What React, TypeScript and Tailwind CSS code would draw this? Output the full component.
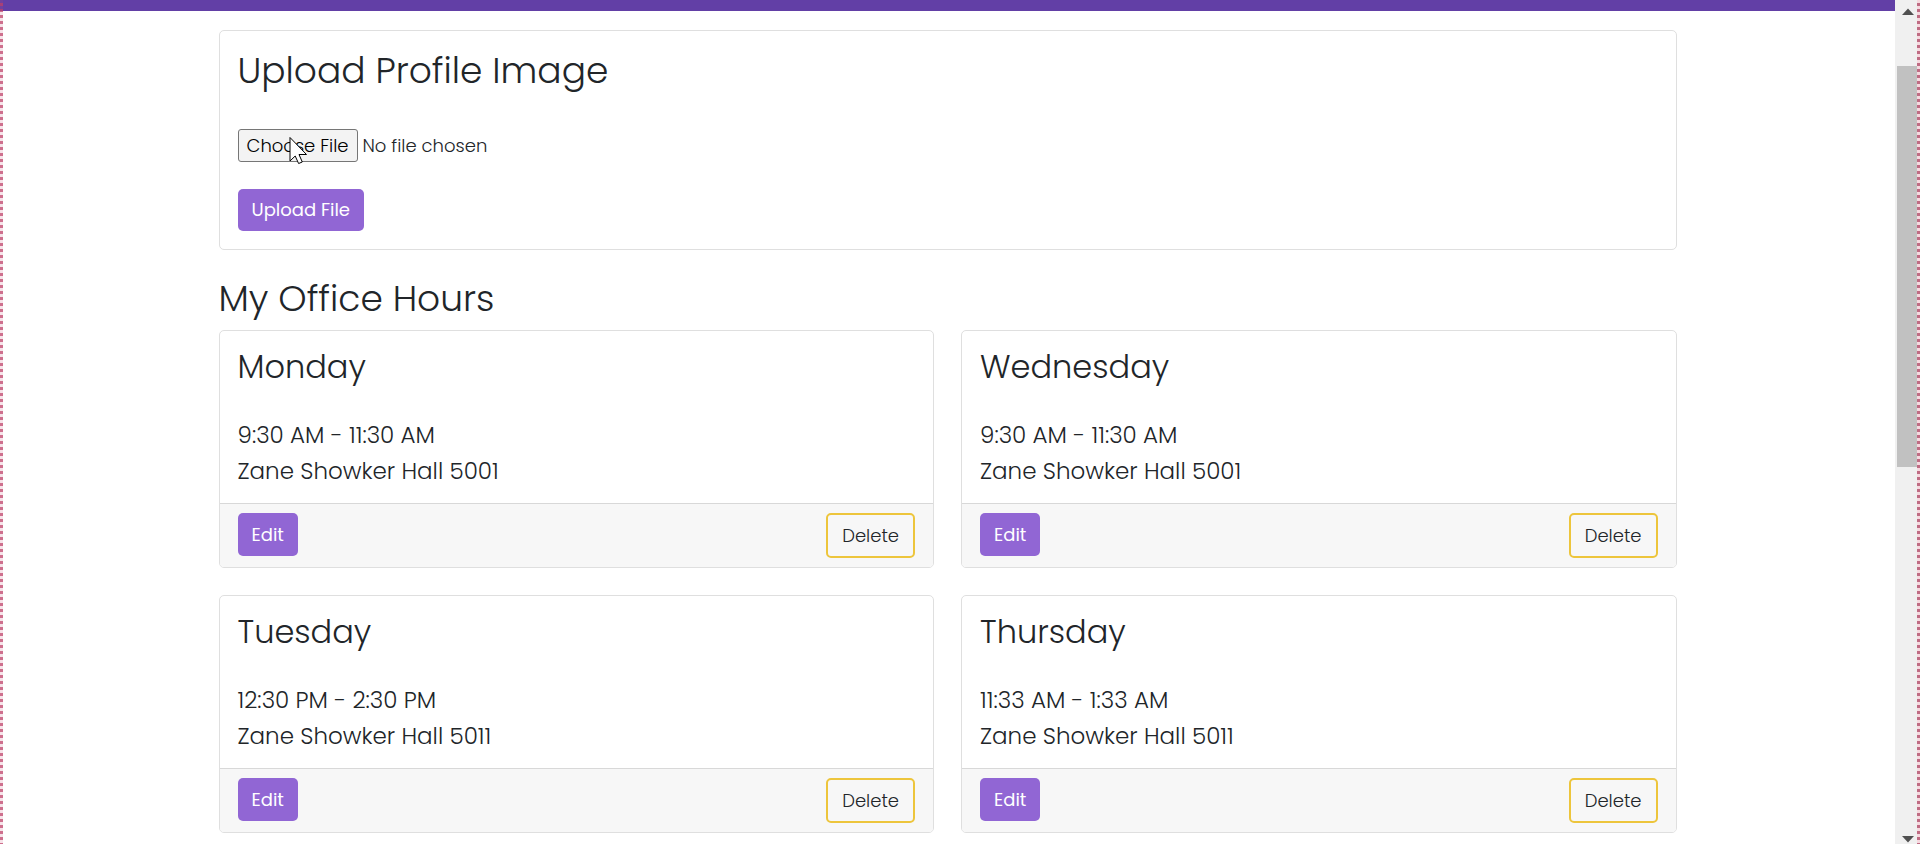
import React from "react";

type Slot = { day: string; time: string; place: string };

const slots: Slot[] = [
  { day: "Monday", time: "9:30 AM - 11:30 AM", place: "Zane Showker Hall 5001" },
  { day: "Wednesday", time: "9:30 AM - 11:30 AM", place: "Zane Showker Hall 5001" },
  { day: "Tuesday", time: "12:30 PM - 2:30 PM", place: "Zane Showker Hall 5011" },
  { day: "Thursday", time: "11:33 AM - 1:33 AM", place: "Zane Showker Hall 5011" },
];

function OfficeHourCard({ day, time, place }: Slot) {
  return (
    <article className="overflow-hidden rounded-[5px] border border-[#dfdfdf] bg-white">
      <div className="px-[18px] pt-[17px] pb-[14px]">
        <h3 className="mb-[31px] text-[32px] leading-[38px]">{day}</h3>
        <p className="text-[23px] leading-9">{time}</p>
        <p className="text-[23px] leading-9">{place}</p>
      </div>
      <div className="flex items-start justify-between border-t border-[#d8d8d8] bg-[#f7f7f7] px-[18px] py-[9px]">
        <button type="button" className="h-[43px] rounded-[5px] bg-[#9166d4] px-[14px] text-lg font-normal text-white">
          Edit
        </button>
        <button type="button" className="h-[45px] rounded-[5px] border-2 border-[#edc53c] px-[14px] text-lg">
          Delete
        </button>
      </div>
    </article>
  );
}

function Scrollbar() {
  return (
    <div aria-hidden="true" className="flex w-[25px] shrink-0 flex-col items-center bg-[#f0f0f0]">
      <svg className="mt-2 h-[7px] w-3" viewBox="0 0 12 7">
        <path d="M6 0.5 12 7H0z" fill="#505050" />
      </svg>
      <div className="mt-[51px] h-[401px] w-[21px] bg-[#c1c1c1]" />
      <svg className="mt-auto mb-px h-[7px] w-3" viewBox="0 0 12 7">
        <path d="M6 6.5 12 0H0z" fill="#505050" />
      </svg>
    </div>
  );
}

export default function App() {
  return (
    <div className="relative flex h-screen overflow-hidden bg-white font-['Poppins','Inter',sans-serif] font-light text-[#212529]">
      <div className="min-w-0 flex-1">
        <header className="h-[11px] bg-[#623fa6]" />
        <main className="mx-auto mt-[19px] w-full max-w-[1458px]">
          <section className="rounded-[5px] border border-[#dfdfdf] px-[18px] pt-[18px] pb-[18px]">
            <h2 className="text-[36px] leading-[44px]">Upload Profile Image</h2>
            <div className="relative mt-9">
              <input
                type="file"
                aria-label="Profile image"
                className="block h-[33px] text-lg leading-[27px] file:mr-[5px] file:h-[33px] file:rounded-[3px] file:border file:border-solid file:border-[#767676] file:bg-[#f3f3f3] file:px-2 file:font-light file:text-black"
              />
              <svg className="pointer-events-none absolute top-2 left-[51px] h-7 w-[19px]" viewBox="0 0 19 28" aria-hidden="true">
                <path d="M1 0.5V24L6.2 19 9.6 26.5 13.3 25 10 17.5H17.5z" fill="#fff" stroke="#000" strokeWidth="1" />
              </svg>
            </div>
            <button type="button" className="mt-[27px] h-[42px] rounded-[5px] bg-[#9166d4] px-[14px] text-lg font-normal text-white">
              Upload File
            </button>
          </section>
          <h2 className="mt-[27px] mb-[9px] text-[36px] leading-[44px]">My Office Hours</h2>
          <div className="grid grid-cols-2 gap-[27px]">
            {slots.map((slot) => (
              <OfficeHourCard key={slot.day} {...slot} />
            ))}
          </div>
        </main>
      </div>
      <Scrollbar />
      <div
        aria-hidden="true"
        className="pointer-events-none absolute inset-y-0 left-0 w-[3px] bg-[repeating-linear-gradient(180deg,#c8466e26_0px,#c8466e26_3px,#be4068c0_3px,#be4068c0_6px)]"
      />
      <div
        aria-hidden="true"
        className="pointer-events-none absolute inset-y-0 right-0 w-[3px] bg-[repeating-linear-gradient(180deg,#f6d9df_0px,#f6d9df_3px,#bf6b83_3px,#bf6b83_6px)]"
      />
    </div>
  );
}
